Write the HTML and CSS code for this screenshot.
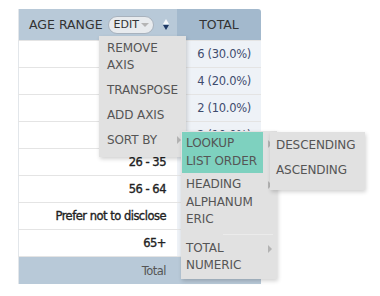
FILE: index.html
```html
<!DOCTYPE html>
<html lang="en">
<head>
    <meta charset="UTF-8">
    <meta name="viewport" content="width=device-width, initial-scale=1.0">
    <title>Pivot</title>
    <link rel="stylesheet" href="styles.css">
</head>
<body>
    <div class="pivot">
        <table class="grid">
            <tr class="head">
                <th class="axis">
                    <div class="axis-cell">
                        <span>AGE RANGE</span>
                        <span class="edit">EDIT <i class="caret"></i></span>
                        <span class="sort"><i class="up"></i><i class="down"></i></span>
                    </div>
                </th>
                <th class="total-head">TOTAL</th>
            </tr>
            <tr><td class="label"></td><td class="value">6 (30.0%)</td></tr>
            <tr><td class="label"></td><td class="value">4 (20.0%)</td></tr>
            <tr><td class="label"></td><td class="value">2 (10.0%)</td></tr>
            <tr><td class="label"></td><td class="value">2 (10.0%)</td></tr>
            <tr><td class="label">26 - 35</td><td class="value"></td></tr>
            <tr><td class="label">56 - 64</td><td class="value"></td></tr>
            <tr><td class="label">Prefer not to disclose</td><td class="value"></td></tr>
            <tr><td class="label">65+</td><td class="value"></td></tr>
            <tr class="foot"><td class="label">Total</td><td class="value"></td></tr>
        </table>

        <div class="menu menu-axis">
            <div class="item">REMOVE<br>AXIS</div>
            <div class="item">TRANSPOSE</div>
            <div class="item">ADD AXIS</div>
            <div class="item sub">SORT BY <i class="arrow"></i></div>
        </div>

        <div class="menu menu-sort">
            <div class="item sub active"><span class="text">LOOKUP<br>LIST ORDER</span><i class="arrow"></i></div>
            <div class="item sub"><span class="text">HEADING<br>ALPHANUM<br>ERIC</span><i class="arrow"></i></div>
            <div class="sep"></div>
            <div class="item sub"><span class="text">TOTAL<br>NUMERIC</span><i class="arrow"></i></div>
        </div>

        <div class="menu menu-order">
            <div class="item">DESCENDING</div>
            <div class="item">ASCENDING</div>
        </div>
    </div>
</body>
</html>
```

FILE: styles.css
```css
body, html {
    margin: 0;
    background: #fff;
    font-family: "DejaVu Sans", sans-serif;
}

.pivot {
    position: relative;
    width: 380px;
    height: 296px;
    padding: 9px 0 0 18px;
    box-sizing: border-box;
}

.grid {
    border-collapse: collapse;
    border-left: 1px solid #e2e6ea;
}

.grid th, .grid td {
    padding: 0;
}

.head th {
    height: 31px;
    font-size: 12.5px;
    font-weight: normal;
    color: #333;
}

.axis {
    width: 158px;
    background: #b8c9d8;
    text-align: left;
}

.axis-cell {
    display: flex;
    align-items: center;
    padding-left: 10px;
}

.edit {
    display: inline-flex;
    align-items: center;
    height: 16px;
    margin-left: 5px;
    padding: 0 4px 0 5px;
    border: 1px solid #a8b2bd;
    border-radius: 9px;
    background: #e8ebee;
    font-size: 11px;
    color: #333;
}

.caret {
    width: 0;
    height: 0;
    margin-left: 2px;
    border-left: 4px solid transparent;
    border-right: 4px solid transparent;
    border-top: 4px solid #b5b5b5;
}

.sort {
    display: flex;
    flex-direction: column;
    gap: 1px;
    margin-left: 9px;
}

.sort .up {
    border-left: 3.5px solid transparent;
    border-right: 3.5px solid transparent;
    border-bottom: 5px solid #f4f7fa;
}

.sort .down {
    border-left: 3.5px solid transparent;
    border-right: 3.5px solid transparent;
    border-top: 5px solid #1f3a66;
}

.total-head {
    width: 84px;
    background: #a3b9cd;
    text-align: center;
    border-top-right-radius: 3px;
}

.grid td {
    height: 26px;
    border-top: 1px solid #e4e4e4;
    font-size: 11.5px;
    text-align: right;
    letter-spacing: -0.3px;
}

.label {
    padding-right: 11px !important;
    color: #222;
    letter-spacing: -0.5px !important;
    -webkit-text-stroke: 0.35px #222;
}

.value {
    padding-right: 10px !important;
    background: #eef2f7;
    color: #3e4c6e;
}

.foot td {
    height: 27px;
    background: #b8c9d8;
    color: #555;
    -webkit-text-stroke: 0;
}

.menu {
    position: absolute;
    background: #e1e1e1;
    box-shadow: 1px 2px 4px rgba(0, 0, 0, 0.18);
    font-size: 12px;
    color: #555;
    white-space: nowrap;
    letter-spacing: -0.1px;
}

.item {
    position: relative;
    line-height: 17px;
}

.arrow {
    position: absolute;
    width: 0;
    height: 0;
    border-top: 4px solid transparent;
    border-bottom: 4px solid transparent;
    border-left: 4px solid #b3b3b3;
}

.menu-axis {
    left: 99px;
    top: 36px;
    width: 87px;
    padding-bottom: 4px;
}

.menu-axis .item {
    padding: 4px 8px;
}

.menu-axis .arrow {
    right: 5px;
    top: 8px;
}

.menu-sort {
    left: 181px;
    top: 131px;
    width: 96px;
    height: 148px;
    padding-top: 1px;
    box-sizing: border-box;
}

.menu-sort .item {
    margin-right: 14px;
    padding: 3px 0 3px 5px;
    line-height: 17.5px;
}

.menu-sort .item.active {
    margin-left: 1px;
    padding-left: 4px;
    background: #7ed1bf;
}

.menu-sort .arrow {
    right: -9px;
    top: 8px;
}

.sep {
    margin: 2px 4px 2px 42px;
    border-top: 1px solid #ebebeb;
}

.menu-order {
    left: 270px;
    top: 132px;
    width: 95px;
    padding: 4px 0 4px 6px;
    box-sizing: border-box;
}

.menu-order .item {
    line-height: 17px;
    padding: 1px 0 7px;
}
```
